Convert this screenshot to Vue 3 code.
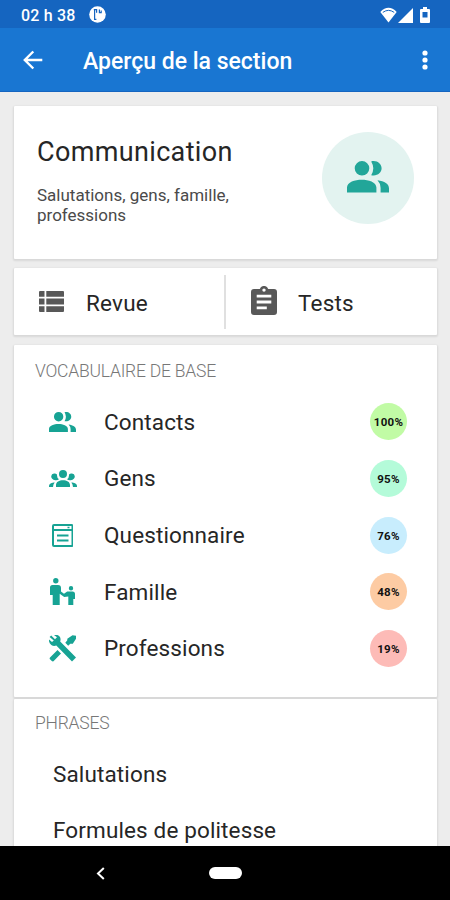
<template>
    <div class="screen">
        <header class="status-bar">
            <span class="clock">02 h 38</span>
            <svg class="status-app" viewBox="0 0 17 17">
                <circle cx="8.5" cy="8.5" r="8.3" fill="#fff" />
                <path d="M4.8 3.6H7.6V6.8M5.6 3.6V13.4H7.4M10.4 3.4V6.6H12.2V4.6" fill="none" stroke="#1565c0" stroke-width="1.2" />
            </svg>
            <div class="status-icons">
                <svg class="wifi" viewBox="0 0 17 16">
                    <path d="M8.5 15.5L0.3 5Q8.5 -3.4 16.7 5Z" fill="#fff" />
                    <path d="M2.8 5.4Q8.5 1.3 14.2 5.4" fill="none" stroke="#1565c0" stroke-width="1" />
                </svg>
                <svg class="signal" viewBox="0 0 15 15"><path d="M15 0V15H0Z" fill="#fff" /></svg>
                <svg class="battery" viewBox="0 0 10 16">
                    <path d="M3 0H7V2H9Q10 2 10 3V15Q10 16 9 16H1Q0 16 0 15V3Q0 2 1 2H3Z" fill="#fff" />
                    <path d="M2.5 5H7.5V10.5H2.5Z" fill="#1565c0" />
                </svg>
            </div>
        </header>

        <nav class="app-bar">
            <svg class="back" viewBox="0 0 20 20">
                <path d="M19.3 10H2M10.3 1.5L1.8 10L10.3 18.5" fill="none" stroke="#fff" stroke-width="2.4" />
            </svg>
            <h1>Aperçu de la section</h1>
            <svg class="more" viewBox="0 0 6 20">
                <circle cx="3" cy="3" r="2.6" />
                <circle cx="3" cy="10" r="2.6" />
                <circle cx="3" cy="17" r="2.6" />
            </svg>
        </nav>

        <main class="content">
            <section class="card summary">
                <div class="summary-text">
                    <h2>Communication</h2>
                    <p>Salutations, gens, famille,<br>professions</p>
                </div>
                <div class="summary-icon">
                    <svg viewBox="0 0 42 31.5"><path :d="peoplePath" /></svg>
                </div>
            </section>

            <section class="card actions">
                <div class="action">
                    <svg class="list-icon" viewBox="0 0 25 21">
                        <path d="M1 0H5.5V5.8H0V1Q0 0 1 0ZM7.3 0H24Q25 0 25 1V5.8H7.3ZM0 7.6H5.5V13.4H0ZM7.3 7.6H25V13.4H7.3ZM0 15.2H5.5V21H1Q0 21 0 20ZM7.3 15.2H25V20Q25 21 24 21H7.3Z" />
                    </svg>
                    <span>Revue</span>
                </div>
                <div class="action tests">
                    <svg class="clip-icon" viewBox="0 0 26 29">
                        <path fill-rule="evenodd" d="M3 3H8.8A4.4 4.4 0 0 1 17.2 3H23Q26 3 26 6V26Q26 29 23 29H3Q0 29 0 26V6Q0 3 3 3ZM13 2.4A1.7 1.7 0 1 0 13 5.8A1.7 1.7 0 1 0 13 2.4ZM5.7 8.8V11.6H20.3V8.8ZM5.7 14.6V17.4H20.3V14.6ZM5.7 20.4V23.2H15.8V20.4Z" />
                    </svg>
                    <span>Tests</span>
                </div>
            </section>

            <section class="card vocabulary">
                <h3>VOCABULAIRE DE BASE</h3>
                <div v-for="topic in topics" :key="topic.name" class="topic">
                    <div class="topic-icon">
                        <svg :viewBox="`0 0 ${topic.w} ${topic.h}`" :style="{ width: topic.size + 'px' }">
                            <path :d="topic.path" fill-rule="evenodd" />
                        </svg>
                    </div>
                    <span class="topic-name">{{ topic.name }}</span>
                    <span class="badge" :class="topic.level">{{ topic.score }}</span>
                </div>
            </section>

            <section class="card phrases">
                <h3>PHRASES</h3>
                <div v-for="phrase in phrases" :key="phrase" class="phrase">{{ phrase }}</div>
            </section>
        </main>

        <footer class="nav-bar">
            <svg class="nav-back" viewBox="0 0 9 13">
                <path d="M7.8 1L2 6.5L7.8 12" fill="none" stroke="#fff" stroke-width="2" />
            </svg>
            <div class="home"></div>
        </footer>
    </div>
</template>

<script setup>
import { ref } from 'vue';

const peoplePath = 'M15 0A7.3 7.3 0 1 1 15 14.6A7.3 7.3 0 1 1 15 0ZM24.2 0.4C30 -1 34.6 2.8 34.6 7.3S30 15.6 24.2 14.2Q28.4 7.3 24.2 0.4ZM0 31.5V26.5C0 21 8 18.7 14.7 18.7S29.4 21 29.4 26.5V31.5ZM30.5 19.3C37.5 20.2 42 22.8 42 27.5V31.5H33.6V27Q33.6 22.5 30.5 19.3Z';

const groupPath = 'M14 0A4 4 0 1 1 14 8A4 4 0 1 1 14 0ZM7 17.5V15C7 11.8 10.3 10.2 14 10.2S21 11.8 21 15V17.5ZM5 3.5Q6.8 3.2 8 4.6Q7.7 8 10 9.2Q8.3 10.6 6.2 10.2Q2.2 9.5 2.2 6.3Q2.5 3.7 5 3.5ZM23 3.5Q21.2 3.2 20 4.6Q20.3 8 18 9.2Q19.7 10.6 21.8 10.2Q25.8 9.5 25.8 6.3Q25.5 3.7 23 3.5ZM4.7 12.4Q0 13 0 16V17.5H4Q4 14 5.7 12.4ZM23.3 12.4Q28 13 28 16V17.5H24Q24 14 22.3 12.4Z';

const formPath = 'M2 0H19.5Q21.5 0 21.5 2V21Q21.5 23 19.5 23H2Q0 23 0 21V2Q0 0 2 0ZM2 2V5H19.5V2ZM2 7V21H19.5V7ZM5 10.5H16.5V12.5H5ZM5 15.5H16.5V17.5H5ZM15.5 2.8H17.5V4.2H15.5Z';

const familyPath = 'M5.8 0A2.7 2.7 0 1 1 5.8 5.4A2.7 2.7 0 1 1 5.8 0ZM2.5 7H8Q11 7 11 10V13.5L14 15.8L17.2 13.5H22.5Q25 13.5 25 16V21H23.3V27H18.3V18.5L14.2 19L9.7 15.8V27H2.7V17H0V9.5Q0 7 2.5 7ZM21 8A2.2 2.2 0 1 1 21 12.4A2.2 2.2 0 1 1 21 8Z';

const toolsPath = 'M2.2 0.5L6 4.3L8 2.2L5 0Q8.8 -1 11 2Q12 4 11.2 6.5L27 22.5L23 26.5L7.3 10.6Q4.5 11.5 2.3 10Q-0.5 7.5 0 4.5L3 7L4.8 5.5L0.6 2ZM1 22.5L8.5 15L12 18.5L4.5 26.3Q3.5 26.7 2.8 26L1 24.3Q0.3 23.4 1 22.5ZM19.2 10.8L16.3 7.8L18.3 5.3V3.8L23.5 0.3L27 0.8V3.8L23.8 8.8L21.3 8.7Z';

const topics = ref([
    { name: 'Contacts', score: '100%', level: 'lime', path: peoplePath, w: 42, h: 31.5, size: 27 },
    { name: 'Gens', score: '95%', level: 'mint', path: groupPath, w: 28, h: 17.5, size: 28 },
    { name: 'Questionnaire', score: '76%', level: 'sky', path: formPath, w: 21.5, h: 23, size: 21.5 },
    { name: 'Famille', score: '48%', level: 'orange', path: familyPath, w: 25, h: 27, size: 25 },
    { name: 'Professions', score: '19%', level: 'red', path: toolsPath, w: 27, h: 26.5, size: 27 },
]);

const phrases = ref(['Salutations', 'Formules de politesse']);
</script>

<style>
body {
    margin: 0;
}
</style>

<style scoped>
.screen {
    display: flex;
    flex-direction: column;
    width: 450px;
    height: 900px;
    overflow: hidden;
    background: #ededed;
    color: #262626;
    font-family: Roboto, "Liberation Sans", sans-serif;
}

svg {
    display: block;
    flex: none;
}

h1,
h2,
h3,
p {
    margin: 0;
}

.status-bar {
    display: flex;
    align-items: center;
    flex: none;
    box-sizing: border-box;
    height: 28px;
    padding: 1px 20px 0 21px;
    background: #1565c0;
    color: #fff;
}

.clock {
    width: 68px;
    padding-top: 2px;
    font-size: 16px;
    font-weight: 500;
    letter-spacing: 0.2px;
    white-space: nowrap;
}

.status-app {
    width: 17px;
    height: 17px;
}

.status-icons {
    display: flex;
    align-items: center;
    margin-left: auto;
}

.wifi {
    width: 17px;
    height: 16px;
}

.signal {
    width: 15px;
    height: 15px;
    margin: 1px 7px 0 1px;
}

.battery {
    width: 10px;
    height: 16px;
}

.app-bar {
    display: flex;
    align-items: center;
    flex: none;
    box-sizing: border-box;
    height: 64px;
    padding: 1px 22px 0 23px;
    border-bottom: 1px solid #1565c0;
    background: #1976d2;
    color: #fff;
}

.back {
    width: 20px;
    height: 20px;
}

h1 {
    margin-left: 40px;
    padding-top: 4px;
    font-size: 23px;
    font-weight: 500;
    line-height: 30px;
    white-space: nowrap;
}

.more {
    width: 6px;
    height: 20px;
    margin-left: auto;
    fill: #fff;
}

.content {
    flex: 1;
    min-height: 0;
    padding: 14px 13px 0 14px;
    overflow: hidden;
}

.card {
    box-sizing: border-box;
    background: #fff;
    border-radius: 1px;
    box-shadow: 0 1px 2px 1px rgba(0, 0, 0, 0.09);
}

.summary {
    display: flex;
    justify-content: space-between;
    height: 153px;
    padding: 26px 23px 0 23px;
}

h2 {
    margin-top: 3px;
    font-size: 27px;
    font-weight: 400;
    line-height: 34px;
    letter-spacing: 0.35px;
}

p {
    margin-top: 16px;
    font-size: 17px;
    line-height: 20px;
    color: #4a4a4a;
    white-space: nowrap;
}

.summary-icon {
    display: flex;
    align-items: center;
    justify-content: center;
    flex: none;
    width: 92px;
    height: 92px;
    border-radius: 50%;
    background: #e3f3f0;
}

.summary-icon svg {
    width: 42px;
    margin-top: -2px;
    fill: #22a699;
}

.actions {
    display: flex;
    align-items: center;
    height: 67px;
    margin-top: 9px;
}

.action {
    display: flex;
    align-items: center;
    box-sizing: border-box;
    width: 210px;
    height: 54px;
    padding: 2px 0 0 25px;
    font-size: 22.5px;
    letter-spacing: 0.2px;
}

.action span {
    padding-top: 1px;
}

.action svg {
    fill: #585858;
}

.tests {
    width: 213px;
    border-left: 2px solid #e0e0e0;
}

.list-icon {
    width: 25px;
    height: 21px;
    margin: -2px 22px 0 0;
}

.clip-icon {
    width: 26px;
    height: 29px;
    margin: -4px 21px 0 0;
}

.vocabulary {
    height: 352px;
    margin-top: 10px;
}

h3 {
    box-sizing: border-box;
    height: 48.3px;
    padding: 13px 0 0 21px;
    font-size: 17.5px;
    font-weight: 300;
    line-height: 26px;
    letter-spacing: -0.22px;
    color: #777;
}

.topic {
    display: flex;
    align-items: center;
    box-sizing: border-box;
    height: 56.7px;
    padding: 0 30px 0 34px;
}

.topic-icon {
    display: flex;
    justify-content: center;
    width: 29px;
    margin-right: 27px;
}

.topic-icon svg {
    fill: #17a394;
}

.topic-name,
.phrase {
    font-size: 22.5px;
    letter-spacing: 0.13px;
    white-space: nowrap;
}

.badge {
    width: 37px;
    height: 37px;
    margin-left: auto;
    border-radius: 50%;
    color: #111;
    font-size: 11.5px;
    font-weight: 700;
    line-height: 38px;
    letter-spacing: 0.3px;
    text-align: center;
}

.lime {
    background: #c1fba5;
}

.mint {
    background: #b4fbd9;
}

.sky {
    background: #c8edfd;
}

.orange {
    background: #fdcba3;
}

.red {
    background: #fdbbb7;
}

.phrases {
    height: 170px;
    margin-top: 2px;
}

.phrases h3 {
    height: 46.7px;
    padding-top: 11px;
}

.phrase {
    height: 56.7px;
    padding-left: 39px;
    line-height: 57px;
}

.nav-bar {
    display: flex;
    align-items: center;
    flex: none;
    box-sizing: border-box;
    height: 54px;
    padding-left: 96px;
    background: #000;
}

.nav-back {
    width: 9px;
    height: 13px;
}

.home {
    width: 33px;
    height: 12px;
    margin-left: 104px;
    border-radius: 6px;
    background: #fff;
}
</style>
